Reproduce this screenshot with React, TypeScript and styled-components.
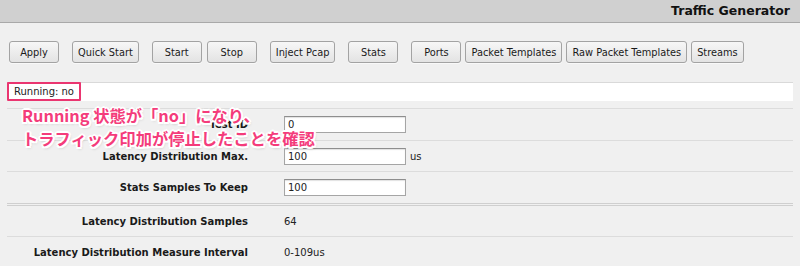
import React from "react";
import styled, { createGlobalStyle } from "styled-components";

const Global = createGlobalStyle`
  html, body { margin: 0; padding: 0; background: #f0f0f0; }
  body { font-family: "DejaVu Sans", Verdana, sans-serif; font-size: 10px; color: #222; overflow: hidden; }
`;

const Page = styled.div`
  position: relative;
  width: 800px;
  height: 266px;
  background: #f0f0f0;
  overflow: hidden;
`;

const Header = styled.div`
  height: 22px;
  background: #d0d0d0;
  border-bottom: 1px solid #a9a9a9;
  display: flex;
  justify-content: flex-end;
  align-items: center;
  padding-right: 10px;
`;

const Title = styled.h1`
  margin: 0;
  font-size: 12.5px;
  font-weight: bold;
  color: #111;
  line-height: 22px;
`;

const Toolbar = styled.div`
  display: flex;
  gap: 13px;
  padding: 18px 0 0 9px;
  height: 22px;
`;

const Group = styled.div<{ $gap?: number }>`
  display: flex;
  gap: ${(p) => p.$gap ?? 5}px;
`;

const Button = styled.button`
  height: 22px;
  min-width: 50px;
  padding: 0 5px;
  border: 1px solid #a3a3a3;
  border-radius: 3px;
  background: linear-gradient(#f7f7f7, #e3e3e3);
  font-family: "DejaVu Sans", Verdana, sans-serif;
  font-size: 9.8px;
  color: #1a1a1a;
  box-shadow: 0 1px 0 rgba(255, 255, 255, 0.6);
  cursor: pointer;
  white-space: nowrap;
`;

const StatusRow = styled.div`
  margin: 19px 7px 0 7px;
  height: 18px;
  background: #fff;
  border-top: 1px solid #d9d9d9;
  display: flex;
  align-items: stretch;
`;

const Highlight = styled.span`
  display: inline-flex;
  align-items: center;
  margin-top: -1px;
  height: 15px;
  padding: 0 5px;
  border: 2px solid #ea3570;
  border-radius: 1px;
  font-size: 10px;
  color: #222;
`;

const Form = styled.div`
  margin: 7px 7px 0 7px;
`;

const Row = styled.div<{ $h: number; $double?: boolean }>`
  display: grid;
  grid-template-columns: 241px auto;
  align-items: center;
  height: ${(p) => p.$h}px;
  border-top: ${(p) => (p.$double ? "3px double #cfcfcf" : "1px solid #dcdcdc")};
`;

const Label = styled.div`
  text-align: right;
  font-weight: bold;
  font-size: 10px;
  color: #1a1a1a;
`;

const Value = styled.div`
  display: flex;
  align-items: center;
  gap: 4px;
  padding-left: 36px;
  font-size: 10px;
  color: #222;
`;

const Input = styled.input`
  box-sizing: border-box;
  width: 122px;
  height: 17px;
  padding: 0 3px;
  border: 1px solid #a5a5a5;
  border-top-color: #8e8e8e;
  box-shadow: inset 0 1px 1px rgba(0, 0, 0, 0.12);
  background: #fff;
  font-family: "DejaVu Sans", Verdana, sans-serif;
  font-size: 10px;
  color: #222;
  outline: none;
`;

const Note = styled.div`
  position: absolute;
  left: 22px;
  top: 104px;
  font-family: "Noto Sans CJK JP", "Noto Sans", sans-serif;
  font-size: 16.3px;
  font-weight: 700;
  line-height: 23px;
  color: #f43c7b;
  white-space: nowrap;
  text-shadow:
    -1.5px -1.5px 0 #fff, 1.5px -1.5px 0 #fff, -1.5px 1.5px 0 #fff, 1.5px 1.5px 0 #fff,
    0 -2px 0 #fff, 0 2px 0 #fff, -2px 0 0 #fff, 2px 0 0 #fff,
    1px 2px 3px rgba(0, 0, 0, 0.25);
`;

type Field = { label: string; h: number; double?: boolean; input?: string; unit?: string; text?: string };

const fields: Field[] = [
  { label: "Test ID", h: 31, input: "0" },
  { label: "Latency Distribution Max.", h: 30, input: "100", unit: "us" },
  { label: "Stats Samples To Keep", h: 31, input: "100" },
  { label: "Latency Distribution Samples", h: 30, double: true, text: "64" },
  { label: "Latency Distribution Measure Interval", h: 31, text: "0-109us" },
];

export default function App() {
  return (
    <Page>
      <Global />
      <Header>
        <Title>Traffic Generator</Title>
      </Header>
      <Toolbar>
        <Group><Button>Apply</Button></Group>
        <Group><Button>Quick Start</Button></Group>
        <Group><Button>Start</Button><Button>Stop</Button></Group>
        <Group><Button>Inject Pcap</Button></Group>
        <Group><Button>Stats</Button></Group>
        <Group $gap={4}>
          <Button>Ports</Button>
          <Button>Packet Templates</Button>
          <Button>Raw Packet Templates</Button>
          <Button>Streams</Button>
        </Group>
      </Toolbar>
      <StatusRow>
        <Highlight>Running: no</Highlight>
      </StatusRow>
      <Form>
        {fields.map((f) => (
          <Row key={f.label} $h={f.h} $double={f.double}>
            <Label>{f.label}</Label>
            <Value>
              {f.input !== undefined ? <Input defaultValue={f.input} /> : f.text}
              {f.unit}
            </Value>
          </Row>
        ))}
      </Form>
      <Note>
        Running 状態が「no」になり、
        <br />
        トラフィック印加が停止したことを確認
      </Note>
    </Page>
  );
}
